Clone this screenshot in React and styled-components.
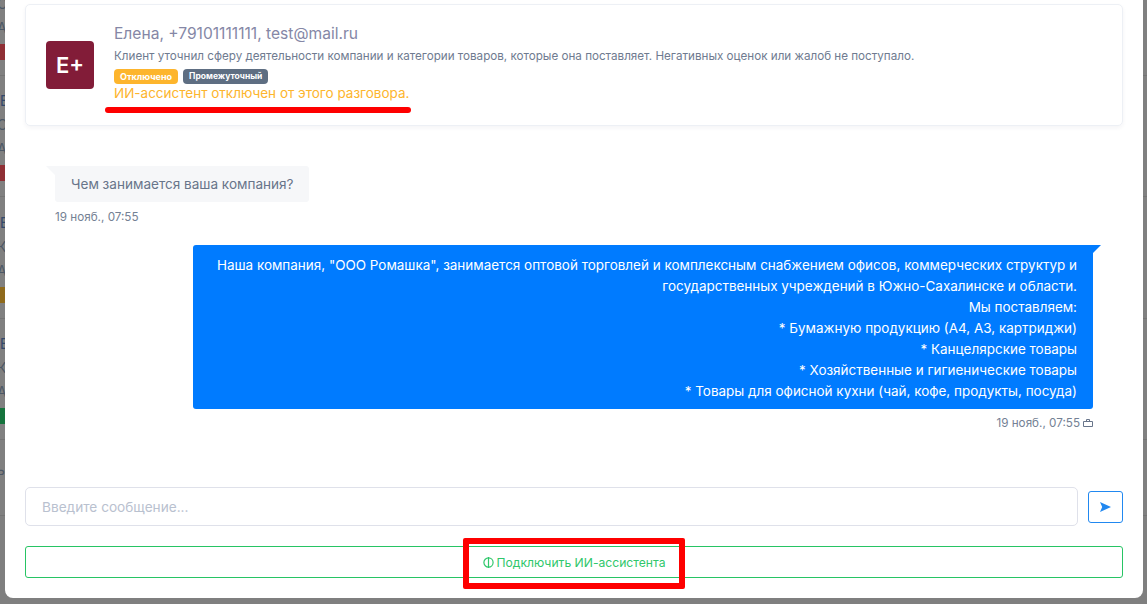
import styled, { createGlobalStyle } from "styled-components";

const GlobalStyle = createGlobalStyle`
  html, body { margin: 0; padding: 0; height: 100%; }
  body { font-family: Inter, "Liberation Sans", sans-serif; background: #7f7f7f; overflow: hidden; }
`;

const Backdrop = styled.div`
  width: 1147px;
  height: 604px;
  padding-bottom: 6px;
  box-sizing: border-box;
  display: flex;
`;

// полоска списка чатов, видна из-под модалки
const Strip = styled.div`
  width: ${(p) => p.$w}px;
  height: 516px;
  flex-shrink: 0;
  overflow: hidden;
  background: #808080;
`;

const ListRow = styled.div`
  height: ${(p) => p.$h}px;
  box-sizing: border-box;
  border-bottom: 1px solid #747474;
  display: flex;
  flex-direction: column;
  justify-content: flex-end;
  padding-bottom: 15px;
  font-size: 14px;
  line-height: 24px;
  color: #4d5866;
  white-space: nowrap;
  & > * { flex-shrink: 0; }
`;

const RowName = styled.div`
  color: #33486b;
`;

const RowLine = styled.div`
  margin-left: -3px;
`;

const RowChip = styled.div`
  height: 16px;
  margin-top: 4px;
  background: ${(p) => p.$bg};
`;

const RowEnd = styled.div`
  margin-left: -3px;
  margin-bottom: 18px;
`;

const Modal = styled.div`
  flex: 1;
  background: #fff;
  border-radius: 0 0 8px 8px;
  padding: 4px 20px 20px;
  display: flex;
  flex-direction: column;
`;

const InfoCard = styled.div`
  height: 122px;
  box-sizing: border-box;
  border: 1px solid #edf0f5;
  border-radius: 5px;
  box-shadow: 0 2px 4px rgba(30, 40, 70, 0.05);
  padding: 0 20px;
  display: flex;
  align-items: center;
  gap: 20px;
`;

const Avatar = styled.div`
  width: 48px;
  height: 48px;
  border-radius: 4px;
  background: #821c38;
  color: #fff;
  font-size: 22px;
  font-weight: 600;
  display: flex;
  align-items: center;
  justify-content: center;
  flex-shrink: 0;
`;

const InfoBody = styled.div`
  display: flex;
  flex-direction: column;
  margin-top: -4px;
`;

const ContactName = styled.div`
  font-size: 15.6px;
  line-height: 20px;
  color: #8587a6;
`;

const Summary = styled.div`
  font-size: 11.65px;
  line-height: 18px;
  margin-top: 3px;
  color: #6f7b90;
`;

const BadgeRow = styled.div`
  display: flex;
  gap: 5px;
  margin-top: 4px;
`;

const Badge = styled.span`
  font-size: ${(p) => p.$size}px;
  font-weight: 700;
  line-height: 15px;
  padding: 0 6px;
  border-radius: 4px;
  color: #fff;
  background: ${(p) => p.$bg};
`;

const Warning = styled.div`
  position: relative;
  font-size: 13.5px;
  line-height: 18px;
  color: #fdb52d;
`;

const Underline = styled.div`
  position: absolute;
  left: -9px;
  top: 23px;
  width: 306px;
  height: 6px;
  border-radius: 3px;
  background: #fe0000;
`;

const Messages = styled.div`
  flex: 1;
  display: flex;
  flex-direction: column;
  padding: 40px 30px 0;
`;

const IncomingBubble = styled.div`
  position: relative;
  align-self: flex-start;
  background: #f6f7f9;
  color: #68758a;
  font-size: 13.55px;
  line-height: 20px;
  padding: 8px 16px;
  border-radius: 0 3px 3px 3px;
  &::before {
    content: "";
    position: absolute;
    left: -9px;
    top: 0;
    border-top: 9px solid #f6f7f9;
    border-left: 9px solid transparent;
  }
`;

const OutgoingBubble = styled.div`
  position: relative;
  align-self: flex-end;
  width: 900px;
  box-sizing: border-box;
  background: #007bff;
  color: #fff;
  font-size: 13.47px;
  line-height: 21px;
  text-align: right;
  padding: 10px 16px 7px 16px;
  border-radius: 3px 0 3px 3px;
  &::before {
    content: "";
    position: absolute;
    right: -8px;
    top: 0;
    border-top: 8px solid #007bff;
    border-right: 8px solid transparent;
  }
`;

const Timestamp = styled.div`
  font-size: 11.7px;
  line-height: 16px;
  color: #748194;
  margin-top: ${(p) => (p.$out ? "6px" : "7px")};
  display: flex;
  align-items: center;
  gap: 3px;
  align-self: ${(p) => (p.$out ? "flex-end" : "flex-start")};
  margin-bottom: ${(p) => (p.$out ? 0 : "20px")};
`;

const InputRow = styled.div`
  display: flex;
  align-items: center;
  gap: 10px;
  margin-bottom: 20px;
`;

const MessageInput = styled.input`
  flex: 1;
  height: 39px;
  box-sizing: border-box;
  border: 1px solid #dfe1ea;
  border-radius: 5px;
  padding: 0 16px;
  font: 13.65px Inter, sans-serif;
  color: #68758a;
  outline: none;
  &::placeholder { color: #b9c1cf; opacity: 1; }
`;

const SendButton = styled.button`
  width: 35px;
  height: 32px;
  box-sizing: border-box;
  border: 1px solid #2188f0;
  border-radius: 3px;
  background: #fff;
  padding: 0;
  display: flex;
  align-items: center;
  justify-content: center;
`;

const ConnectButton = styled.button`
  position: relative;
  height: 32px;
  box-sizing: border-box;
  border: 1px solid #27c464;
  border-radius: 3px;
  background: #fff;
  color: #2fc76b;
  font: 12.15px Inter, sans-serif;
  display: flex;
  align-items: center;
  justify-content: center;
  gap: 3px;
  padding: 0;
`;

const Highlight = styled.div`
  position: absolute;
  left: 437px;
  top: -9px;
  width: 222px;
  height: 51px;
  box-sizing: border-box;
  border: 6px solid #fe0000;
  border-radius: 2px;
  pointer-events: none;
`;

const lines = [
  'Наша компания, "ООО Ромашка", занимается оптовой торговлей и комплексным снабжением офисов, коммерческих структур и',
  "государственных учреждений в Южно-Сахалинске и области.",
  "Мы поставляем:",
  "* Бумажную продукцию (А4, А3, картриджи)",
  "* Канцелярские товары",
  "* Хозяйственные и гигиенические товары",
  "* Товары для офисной кухни (чай, кофе, продукты, посуда)",
];

const rowHeights = [76, 121, 122, 121, 76];

export default function App() {
  return (
    <>
      <GlobalStyle />
      <Backdrop>
        <Strip $w={5}>
          <ListRow $h={76}>
            <RowLine>С</RowLine>
            <RowLine>А</RowLine>
            <RowChip $bg="#8f2f35" />
          </ListRow>
          <ListRow $h={121}>
            <RowName>Е</RowName>
            <RowLine>С</RowLine>
            <RowLine>А</RowLine>
            <RowChip $bg="#8f2f35" />
          </ListRow>
          <ListRow $h={122}>
            <RowName>Е</RowName>
            <RowLine>К</RowLine>
            <RowLine>А</RowLine>
            <RowChip $bg="#8f6a1c" />
          </ListRow>
          <ListRow $h={121}>
            <RowName>Е</RowName>
            <RowLine>К</RowLine>
            <RowLine>А</RowLine>
            <RowChip $bg="#15733c" />
          </ListRow>
          <ListRow $h={76}>
            <RowEnd>ь</RowEnd>
          </ListRow>
        </Strip>
        <Modal>
          <InfoCard>
            <Avatar>Е+</Avatar>
            <InfoBody>
              <ContactName>Елена, +79101111111, test@mail.ru</ContactName>
              <Summary>
                Клиент уточнил сферу деятельности компании и категории товаров, которые она поставляет. Негативных оценок или жалоб не поступало.
              </Summary>
              <BadgeRow>
                <Badge $bg="#fdb52d" $size={9}>Отключено</Badge>
                <Badge $bg="#5e6e82" $size={8.5}>Промежуточный</Badge>
              </BadgeRow>
              <Warning>
                ИИ-ассистент отключен от этого разговора.
                <Underline />
              </Warning>
            </InfoBody>
          </InfoCard>
          <Messages>
            <IncomingBubble>Чем занимается ваша компания?</IncomingBubble>
            <Timestamp>19 нояб., 07:55</Timestamp>
            <OutgoingBubble>
              {lines.map((line) => (
                <div key={line}>{line}</div>
              ))}
            </OutgoingBubble>
            <Timestamp $out>
              19 нояб., 07:55
              <svg width="10" height="8" viewBox="0 0 10 8" fill="none" stroke="#68758a" strokeWidth="1">
                <path d="M.5 2.5h9v5h-9z" />
                <path d="M3.5 2.5v-2h3v2" />
              </svg>
            </Timestamp>
          </Messages>
          <InputRow>
            <MessageInput placeholder="Введите сообщение..." />
            <SendButton aria-label="Отправить">
              <svg width="11" height="10" viewBox="0 0 11 10">
                <path d="M0 0l11 5-11 5 2.2-5z" fill="#2188f0" />
              </svg>
            </SendButton>
          </InputRow>
          <ConnectButton>
            <svg width="11" height="11" viewBox="0 0 11 11" fill="none" stroke="#2fc76b" strokeWidth="1.2">
              <circle cx="5.5" cy="5.5" r="4.6" />
              <path d="M5.5 0v11" />
            </svg>
            Подключить ИИ-ассистента
            <Highlight />
          </ConnectButton>
        </Modal>
        <Strip $w={4}>
          {rowHeights.map((h, i) => (
            <ListRow key={i} $h={h} />
          ))}
        </Strip>
      </Backdrop>
    </>
  );
}
